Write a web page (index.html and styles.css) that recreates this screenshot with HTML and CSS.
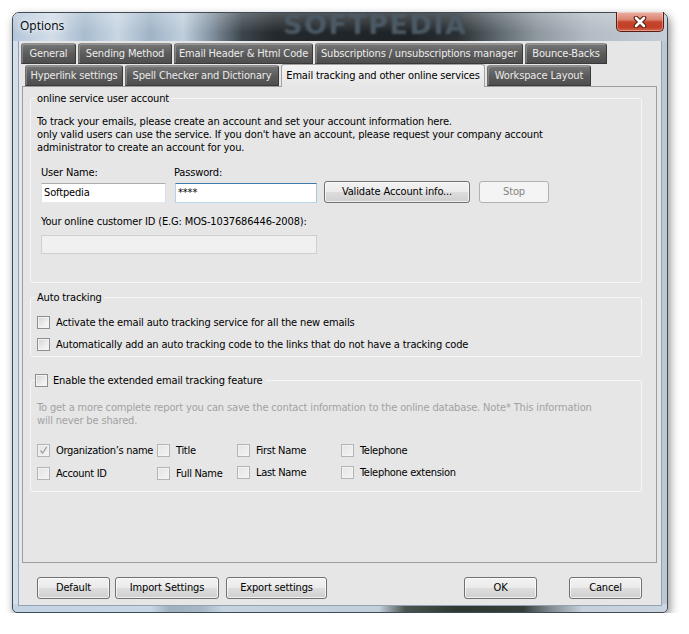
FILE: index.html
```html
<!DOCTYPE html>
<html>
<head>
<meta charset="utf-8">
<title>Options</title>
<link rel="stylesheet" href="styles.css">
</head>
<body>
<div class="window">
  <div class="titlebar">
    <span class="title">Options</span>
    <span class="watermark">SOFTPEDIA</span>
    <div class="close">
      <svg width="14" height="12" viewBox="0 0 14 12"><path d="M3 2 L11 10 M11 2 L3 10" stroke="#5a1a10" stroke-width="4.6" stroke-linecap="round"/><path d="M3 2 L11 10 M11 2 L3 10" stroke="#ffffff" stroke-width="2.6" stroke-linecap="round"/></svg>
    </div>
  </div>
  <div class="client">
    <div class="tabs">
      <div class="tabrow row1">
        <div class="tab w-general">General</div>
        <div class="tab w-sending">Sending Method</div>
        <div class="tab w-header">Email Header &amp; Html Code</div>
        <div class="tab w-subs">Subscriptions / unsubscriptions manager</div>
        <div class="tab w-bounce">Bounce-Backs</div>
      </div>
      <div class="tabrow row2">
        <div class="tab w-hyper">Hyperlink settings</div>
        <div class="tab w-spell">Spell Checker and Dictionary</div>
        <div class="tab active w-tracking">Email tracking and other online services</div>
        <div class="tab w-workspace">Workspace Layout</div>
      </div>
    </div>
    <div class="panel">
      <fieldset class="group g-account">
        <legend>online service user account</legend>
        <p class="intro">To track your emails, please create an account and set your account information here.<br>only valid users can use the service. If you don't have an account, please request your company account<br>administrator to create an account for you.</p>
        <div class="creds">
          <span class="lbl">User Name:</span>
          <span class="lbl lbl-pass">Password:</span>
          <span></span>
          <span></span>
          <div class="input">Softpedia</div>
          <div class="input focus">****</div>
          <div class="btn">Validate Account info...</div>
          <div class="btn disabled">Stop</div>
        </div>
        <div class="lbl cid-label">Your online customer ID (E.G: MOS-1037686446-2008):</div>
        <div class="input cid disabled"></div>
      </fieldset>

      <fieldset class="group g-auto">
        <legend>Auto tracking</legend>
        <div class="cbrow first"><span class="cb"></span><span>Activate the email auto tracking service for all the new emails</span></div>
        <div class="cbrow"><span class="cb"></span><span>Automatically add an auto tracking code to the links that do not have a tracking code</span></div>
      </fieldset>

      <fieldset class="group g-ext">
        <legend class="cb-legend"><span class="cb"></span><span>Enable the extended email tracking feature</span></legend>
        <p class="note">To get a more complete report you can save the contact information to the online database. Note* This information<br>will never be shared.</p>
        <div class="fields">
          <div class="fitem"><span class="cb dis checked"><svg width="11" height="11" viewBox="0 0 11 11"><path d="M2.5 5.5 L4.6 8.2 L8.8 1.8" fill="none" stroke="#a4a4a4" stroke-width="1.3"/></svg></span><span>Organization’s name</span></div>
          <div class="fitem"><span class="cb dis"></span><span>Title</span></div>
          <div class="fitem"><span class="cb dis"></span><span>First Name</span></div>
          <div class="fitem"><span class="cb dis"></span><span>Telephone</span></div>
          <div class="fitem"><span class="cb dis"></span><span>Account ID</span></div>
          <div class="fitem low"><span class="cb dis"></span><span>Full Name</span></div>
          <div class="fitem high"><span class="cb dis"></span><span>Last Name</span></div>
          <div class="fitem high"><span class="cb dis"></span><span>Telephone extension</span></div>
        </div>
      </fieldset>
    </div>
    <div class="footer">
      <div class="btn b-default">Default</div>
      <div class="btn b-import">Import Settings</div>
      <div class="btn b-export">Export settings</div>
      <div class="btn b-ok">OK</div>
      <div class="btn b-cancel">Cancel</div>
    </div>
  </div>
</div>
</body>
</html>
```

FILE: styles.css
```css
* { box-sizing: border-box; }
html, body { margin: 0; padding: 0; background: #ffffff; }
body {
  font-family: "DejaVu Sans Condensed", "DejaVu Sans", "Liberation Sans", sans-serif;
  font-size: 11px;
  letter-spacing: -0.15px;
  color: #000;
}

.window {
  width: 656px;
  height: 601px;
  margin: 12px 0 0 12px;
  border: 1px solid #3e4a55;
  border-radius: 7px 7px 5px 5px;
  padding: 0 6px 7px 6px;
  display: flex;
  flex-direction: column;
  background:
    linear-gradient(90deg, #c3d3e3 0%, #c8d7e6 21%, #9fb0bf 24%, #a8b8c6 29%, #c5d3e0 32%, #c2cfdb 56%, #4a544f 60%, #2e3732 68%, #353e39 78%, #7d878d 82%, #c6d0da 87%, #cbd5df 100%) left bottom / 100% 8px no-repeat,
    linear-gradient(90deg, #d3dfec 0%, #c6d5e4 50%, #bcc7d2 100%);
  box-shadow: 2px 4px 10px rgba(0,0,0,0.45);
}

.titlebar {
  position: relative;
  height: 28px;
  margin: 0 -6px;
  padding: 0 3px 0 7px;
  display: flex;
  align-items: flex-start;
  border-radius: 6px 6px 0 0;
  background:
    linear-gradient(180deg, rgba(255,255,255,0.22), rgba(255,255,255,0) 70%),
    linear-gradient(90deg, #b4c6da 0%, #d2dde9 6%, #a8bccf 11%, #c9d6e3 16%, #9fb3c6 21%, #c0cfdd 26%, #8797a6 30%, #3d464d 35%, #23292d 40%, #1d2226 60%, #2a3034 68%, #5c666d 74%, #8e979e 80%, #b3bcc4 88%, #c5ced6 100%);
}
.title {
  margin-top: 5px;
  font-family: "Open Sans", "Noto Sans", sans-serif;
  font-size: 12px;
  line-height: 16px;
  letter-spacing: 0;
  color: #000;
  text-shadow: 0 0 6px #fff, 0 0 10px rgba(255,255,255,0.9);
}
.watermark {
  position: absolute;
  left: 270px;
  top: -2px;
  font-family: "DejaVu Sans", sans-serif;
  font-weight: bold;
  font-size: 27px;
  line-height: 28px;
  letter-spacing: 1.5px;
  color: #4c5a65;
  filter: blur(1.3px);
}
.close {
  margin-left: auto;
  margin-top: -1px;
  width: 48px;
  height: 20px;
  border: 1px solid #5e1a10;
  border-top: none;
  border-radius: 0 0 5px 5px;
  background: linear-gradient(180deg, #eab2a4 0%, #dc8470 40%, #c5462e 52%, #c23e27 80%, #d4664e 100%);
  box-shadow: inset 0 0 0 1px rgba(255,255,255,0.35);
  display: flex;
  align-items: center;
  justify-content: center;
}

.client {
  height: 564px;
  background: #e6e6e6;
  box-shadow: 0 0 0 1px #93a2b0;
  display: flex;
  flex-direction: column;
}

.tabs { padding-top: 2px; }
.tabrow { display: flex; gap: 2px; height: 21px; }
.row1 { margin-left: 2px; }
.row2 { margin-left: 6px; margin-top: 1px; }
.tab {
  height: 21px;
  border: 1px solid #3a3a3a;
  border-top-color: #8f8f8f;
  border-left-color: #6e6e6e;
  border-radius: 3px 3px 0 0;
  background: linear-gradient(180deg, #767676 0%, #5a5a5a 55%, #4e4e4e 100%);
  box-shadow: inset 1px 1px 0 rgba(255,255,255,0.22);
  color: #ececec;
  text-align: center;
  line-height: 19px;
  white-space: nowrap;
}
.tab.active {
  position: relative;
  z-index: 2;
  height: 23px;
  margin-top: -1px;
  border-color: #a3a3a3;
  border-bottom: none;
  background: linear-gradient(180deg, #f3f3f3, #e6e6e6);
  box-shadow: none;
  color: #000;
  line-height: 21px;
}
.w-general { width: 55px; }
.w-sending { width: 94px; }
.w-header { width: 139px; }
.w-subs { width: 208px; }
.w-bounce { width: 82px; }
.w-hyper { width: 98px; }
.w-spell { width: 154px; }
.w-tracking { width: 204px; }
.w-workspace { width: 104px; }

.panel {
  height: 477px;
  margin: 0 4px 0 3px;
  border: 1px solid #9d9d9d;
  background: #e6e6e6;
  padding: 5px 14px 0 7px;
}

.group {
  margin: 0;
  min-width: 0;
  border: 1px solid #f7f7f7;
  border-radius: 3px;
  padding: 0 6px 0 4px;
}
.group legend {
  padding: 0 2px;
  line-height: 13px;
  height: 13px;
}
.g-account { height: 191px; }
.g-auto { margin-top: 8px; padding-bottom: 1px; }
.g-ext { margin-top: 17px; padding-bottom: 6px; }

.intro {
  margin: 10px 0 0 2px;
  line-height: 13px;
}
.lbl { line-height: 13px; }
.lbl-pass { margin-left: -1px; }
.creds {
  margin: 12px 0 0 6px;
  display: grid;
  grid-template-columns: 134px 149px 155px 70px;
  grid-template-rows: 13px 22px;
  row-gap: 2px;
}
.input {
  height: 20px;
  align-self: end;
  background: #fff;
  border: 1px solid #abadb3;
  border-color: #abadb3 #dbdfe6 #e3e9ef #e2e3ea;
  padding: 0 2px;
  line-height: 18px;
  white-space: nowrap;
}
.creds .input:nth-of-type(1) { width: 125px; }
.creds .input.focus {
  width: 142px;
  border-color: #3d7bad #a4c9e3 #b7d9ed #b5cfe7;
}
.cid-label { margin: 12px 0 0 6px; }
.input.cid {
  margin: 7px 0 0 6px;
  width: 276px;
  height: 19px;
}
.input.disabled {
  background: #f0f0f0;
  border: 1px solid #cfcfcf;
}

.btn {
  height: 22px;
  border: 1px solid #707070;
  border-radius: 3px;
  background: linear-gradient(180deg, #f2f2f2 0%, #ebebeb 48%, #dddddd 52%, #cfcfcf 100%);
  box-shadow: inset 0 0 0 1px rgba(255,255,255,0.7);
  text-align: center;
  line-height: 20px;
  white-space: nowrap;
}
.creds .btn { width: 146px; }
.creds .btn.disabled { width: 70px; }
.btn.disabled {
  border-color: #adb2b5;
  background: #f4f4f4;
  box-shadow: none;
  color: #838383;
}

.cb {
  width: 13px;
  height: 13px;
  flex: none;
  border: 1px solid #8e8f8f;
  background: linear-gradient(135deg, #cfd2d6 0%, #eeeeef 60%, #f8f8f8 100%);
  box-shadow: inset 0 0 0 1px #f3f3f3;
  display: flex;
  align-items: center;
  justify-content: center;
}
.cb.dis {
  border-color: #b4b4b4;
  background: linear-gradient(135deg, #e4e4e4 0%, #f4f4f4 100%);
}
.cbrow {
  display: flex;
  align-items: center;
  gap: 6px;
  height: 22px;
  margin-left: 2px;
}
.cbrow.first { margin-top: 7px; }

.cb-legend {
  display: flex;
  align-items: center;
  gap: 5px;
}
.g-ext .cb-legend { padding: 0 3px 0 0; }

.note {
  margin: 14px 0 0 2px;
  line-height: 13px;
  color: #a2a2a2;
}
.fields {
  margin: 12px 0 0 2px;
  display: grid;
  grid-template-columns: 120px 80px 104px auto;
  grid-template-rows: 22px 24px;
}
.fitem {
  display: flex;
  align-items: center;
  gap: 6px;
  white-space: nowrap;
  letter-spacing: -0.3px;
}
.fitem.low { padding-top: 1px; }
.fitem.high { padding-bottom: 2px; }

.footer {
  margin-top: 14px;
  padding: 0 19px 0 18px;
  display: flex;
}
.b-default { width: 73px; }
.b-import { width: 104px; margin-left: 5px; }
.b-export { width: 101px; margin-left: 7px; }
.b-ok { width: 73px; margin-left: auto; }
.b-cancel { width: 73px; margin-left: 32px; }
```
